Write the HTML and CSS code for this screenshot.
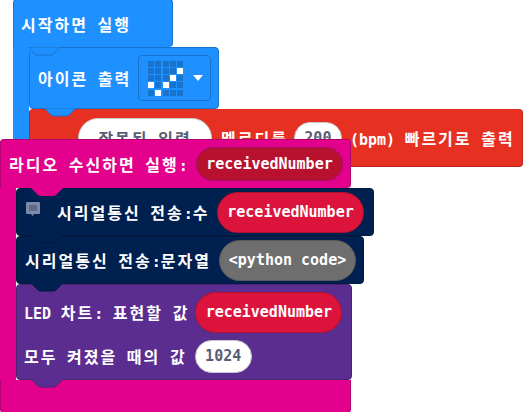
FILE: index.html
```html
<!DOCTYPE html>
<html lang="ko">
<head>
    <meta charset="UTF-8">
    <title>Blocks</title>
    <link rel="stylesheet" href="styles.css">
</head>
<body>
    <!-- on start stack -->
    <div class="stack stack-start">
        <div class="hat basic hat-start">
            <span class="label">시작하면 실행</span>
            <svg class="tab" viewBox="0 0 32 9"><path class="tab-fill-basic" d="M0 0 L7 7 Q8 8 10 8 L22 8 Q24 8 25 7 L32 0 Z"/></svg>
        </div>
        <div class="mouth mouth-basic">
            <div class="block basic row-icon">
                <span class="label">아이콘 출력</span>
                <div class="field">
                    <div class="leds">
                        <i></i><i></i><i></i><i></i><i></i>
                        <i></i><i></i><i></i><i></i><i class="on"></i>
                        <i></i><i></i><i></i><i class="on"></i><i></i>
                        <i class="on"></i><i></i><i class="on"></i><i></i><i></i>
                        <i></i><i class="on"></i><i></i><i></i><i></i>
                    </div>
                    <span class="caret"></span>
                </div>
                <svg class="tab" viewBox="0 0 32 9"><path class="tab-fill-basic" d="M0 0 L7 7 Q8 8 10 8 L22 8 Q24 8 25 7 L32 0 Z"/></svg>
            </div>
            <div class="block music row-melody">
                <span class="pill white pill-text label">잘못된 입력</span>
                <span class="label melody-a">멜로디를</span>
                <span class="pill white pill-num">200</span>
                <span class="label"><span class="latin">(bpm)</span> 빠르기로 출력</span>
            </div>
        </div>
    </div>

    <!-- radio received stack -->
    <div class="stack stack-radio">
        <div class="hat radio hat-radio">
            <span class="label">라디오 수신하면 실행<span class="latin">:</span></span>
            <span class="pill var-dark">receivedNumber</span>
            <svg class="tab" viewBox="0 0 32 9"><path class="tab-fill-radio" d="M0 0 L7 7 Q8 8 10 8 L22 8 Q24 8 25 7 L32 0 Z"/></svg>
        </div>
        <div class="mouth mouth-radio">
            <div class="block serial row-number">
                <svg class="comment" viewBox="0 0 14 15"><path d="M1 0 H13 Q14 0 14 1 V11 Q14 12 13 12 H8 L6.5 14 L5 12 H1 Q0 12 0 11 V1 Q0 0 1 0 Z" fill="#7f8aa8"/><rect x="3" y="3" width="8" height="6" fill="#5d6a8c"/></svg>
                <span class="label">시리얼통신 전송<span class="latin">:</span>수</span>
                <span class="pill var">receivedNumber</span>
                <svg class="tab" viewBox="0 0 32 9"><path class="tab-fill-serial" d="M0 0 L7 7 Q8 8 10 8 L22 8 Q24 8 25 7 L32 0"/></svg>
            </div>
            <div class="block serial row-string">
                <span class="label">시리얼통신 전송<span class="latin">:</span>문자열</span>
                <span class="pill grey">&lt;python code&gt;</span>
                <svg class="tab" viewBox="0 0 32 9"><path class="tab-fill-serial" d="M0 0 L7 7 Q8 8 10 8 L22 8 Q24 8 25 7 L32 0"/></svg>
            </div>
            <div class="block led row-chart">
                <div class="line">
                    <span class="label"><span class="latin">LED</span> 차트<span class="latin">:</span> 표현할 값</span>
                    <span class="pill var">receivedNumber</span>
                </div>
                <div class="line">
                    <span class="label">모두 켜졌을 때의 값</span>
                    <span class="pill white pill-max">1024</span>
                </div>
                <svg class="tab" viewBox="0 0 32 9"><path class="tab-fill-led" d="M0 0 L7 7 Q8 8 10 8 L22 8 Q24 8 25 7 L32 0"/></svg>
            </div>
        </div>
        <div class="foot radio"></div>
    </div>
</body>
</html>
```

FILE: styles.css
```css
/* General Reset */
* {
    margin: 0;
    padding: 0;
    box-sizing: border-box;
}

body {
    width: 523px;
    height: 412px;
    overflow: hidden;
    background-color: #fff;
    font-family: "DejaVu Sans Mono", "Noto Sans CJK KR", monospace;
    font-size: 15px;
    font-weight: bold;
    color: #fff;
}

/* Each stack sits freely on the workspace canvas */
.stack {
    position: absolute;
}

.stack-start {
    left: 13px;
    top: -1px;
}

.stack-radio {
    left: 0;
    top: 139px;
    width: 351px;
}

/* Block colours */
.basic {
    background-color: #1e90ff;
    border: 1px solid #1873cc;
}

.music {
    background-color: #e63022;
    border: 1px solid #b8261b;
}

.radio {
    background-color: #e3008c;
    border: 1px solid #b60070;
}

.serial {
    background-color: #002050;
    border: 1px solid #001a40;
}

.led {
    background-color: #5c2d91;
    border: 1px solid #4a2474;
}

.hat,
.block {
    position: relative;
    display: flex;
    align-items: center;
    border-radius: 4px;
    width: max-content;
}

.label {
    font-size: 16px;
    letter-spacing: 2px;
    word-spacing: -2px;
    font-weight: bold;
    white-space: nowrap;
}

.latin {
    font-size: 15px;
    font-weight: bold;
    letter-spacing: 0;
}

/* Notch tab that hangs off a block into the next one */
.tab {
    position: absolute;
    z-index: 1;
    left: 14px;
    top: 100%;
    width: 32px;
    height: 9px;
}

.tab-fill-basic {
    fill: #1e90ff;
    stroke: #1873cc;
}

.tab-fill-radio {
    fill: #e3008c;
}

.tab-fill-serial {
    fill: #002050;
    stroke: #001a40;
}

.tab-fill-led {
    fill: #5c2d91;
    stroke: #4a2474;
}

.hat-start {
    width: 160px;
    height: 48px;
    padding-left: 7px;
    border-bottom: none;
    border-bottom-left-radius: 0;
}

.hat-radio {
    width: 351px;
    height: 49px;
    padding: 0 7px 0 8px;
    justify-content: space-between;
    border-bottom: none;
    border-radius: 4px 4px 4px 0;
}

.hat-radio .tab {
    left: 30px;
    top: 48px;
}

.mouth {
    width: max-content;
}

.mouth-basic {
    border-left: 16px solid #1e90ff;
}

.mouth-radio {
    border-left: 16px solid #e3008c;
}

.foot {
    height: 33px;
    border-top: none;
    border-radius: 0 0 4px 4px;
}

/* Statement rows */
.row-icon {
    width: 190px;
    height: 62px;
    padding: 0 7px 0 8px;
    justify-content: space-between;
}

.row-melody {
    width: 494px;
    height: 58px;
    padding-left: 48px;
    border-top: none;
}

.melody-a {
    margin-left: 9px;
}

.row-number {
    width: 358px;
    height: 48px;
    padding: 0 9px;
}

.row-number .pill {
    margin-left: auto;
}

.row-string {
    width: 348px;
    height: 48px;
    padding: 0 7px 0 8px;
    justify-content: space-between;
}

.row-chart {
    width: 336px;
    height: 96px;
    padding-left: 7px;
    flex-direction: column;
    align-items: flex-start;
    gap: 7px;
    justify-content: center;
}

.line {
    display: flex;
    align-items: center;
    gap: 6px;
}

.comment {
    width: 14px;
    height: 15px;
    margin-top: -6px;
    margin-right: 17px;
}

/* Value pills */
.pill {
    display: inline-flex;
    align-items: center;
    justify-content: center;
    width: 147px;
    height: 41px;
    border-radius: 21px;
    white-space: nowrap;
}

.var {
    background-color: #dc143c;
    border: 1px solid #b01030;
}

.var-dark {
    height: 34px;
    border-radius: 17px;
    background-color: #b8112f;
    border: 1px solid #a00f68;
}

.grey {
    width: 137px;
    background-color: #6e6e6e;
    border: 1px solid #585858;
}

.white {
    background-color: #fff;
    color: #575e75;
    border: 1px solid #c9c9c9;
}

.pill-text {
    width: 134px;
    height: 40px;
    border-radius: 20px;
}

.pill-num {
    width: 48px;
    height: 32px;
    margin: 0 8px 0 6px;
}

.pill-max {
    width: 57px;
    height: 33px;
    margin-left: 2px;
}

/* Icon picker */
.field {
    display: flex;
    align-items: center;
    width: 73px;
    height: 46px;
    padding-left: 9px;
    gap: 10px;
    border: 1px solid #1873cc;
    border-radius: 4px;
}

.leds {
    display: grid;
    grid-template-columns: repeat(5, 6px);
    grid-auto-rows: 6px;
    gap: 1.25px;
}

.leds i {
    background-color: #1873cc;
}

.leds i.on {
    background-color: #fff;
}

.caret {
    width: 0;
    height: 0;
    border-left: 5px solid transparent;
    border-right: 5px solid transparent;
    border-top: 6px solid #fff;
}
```
